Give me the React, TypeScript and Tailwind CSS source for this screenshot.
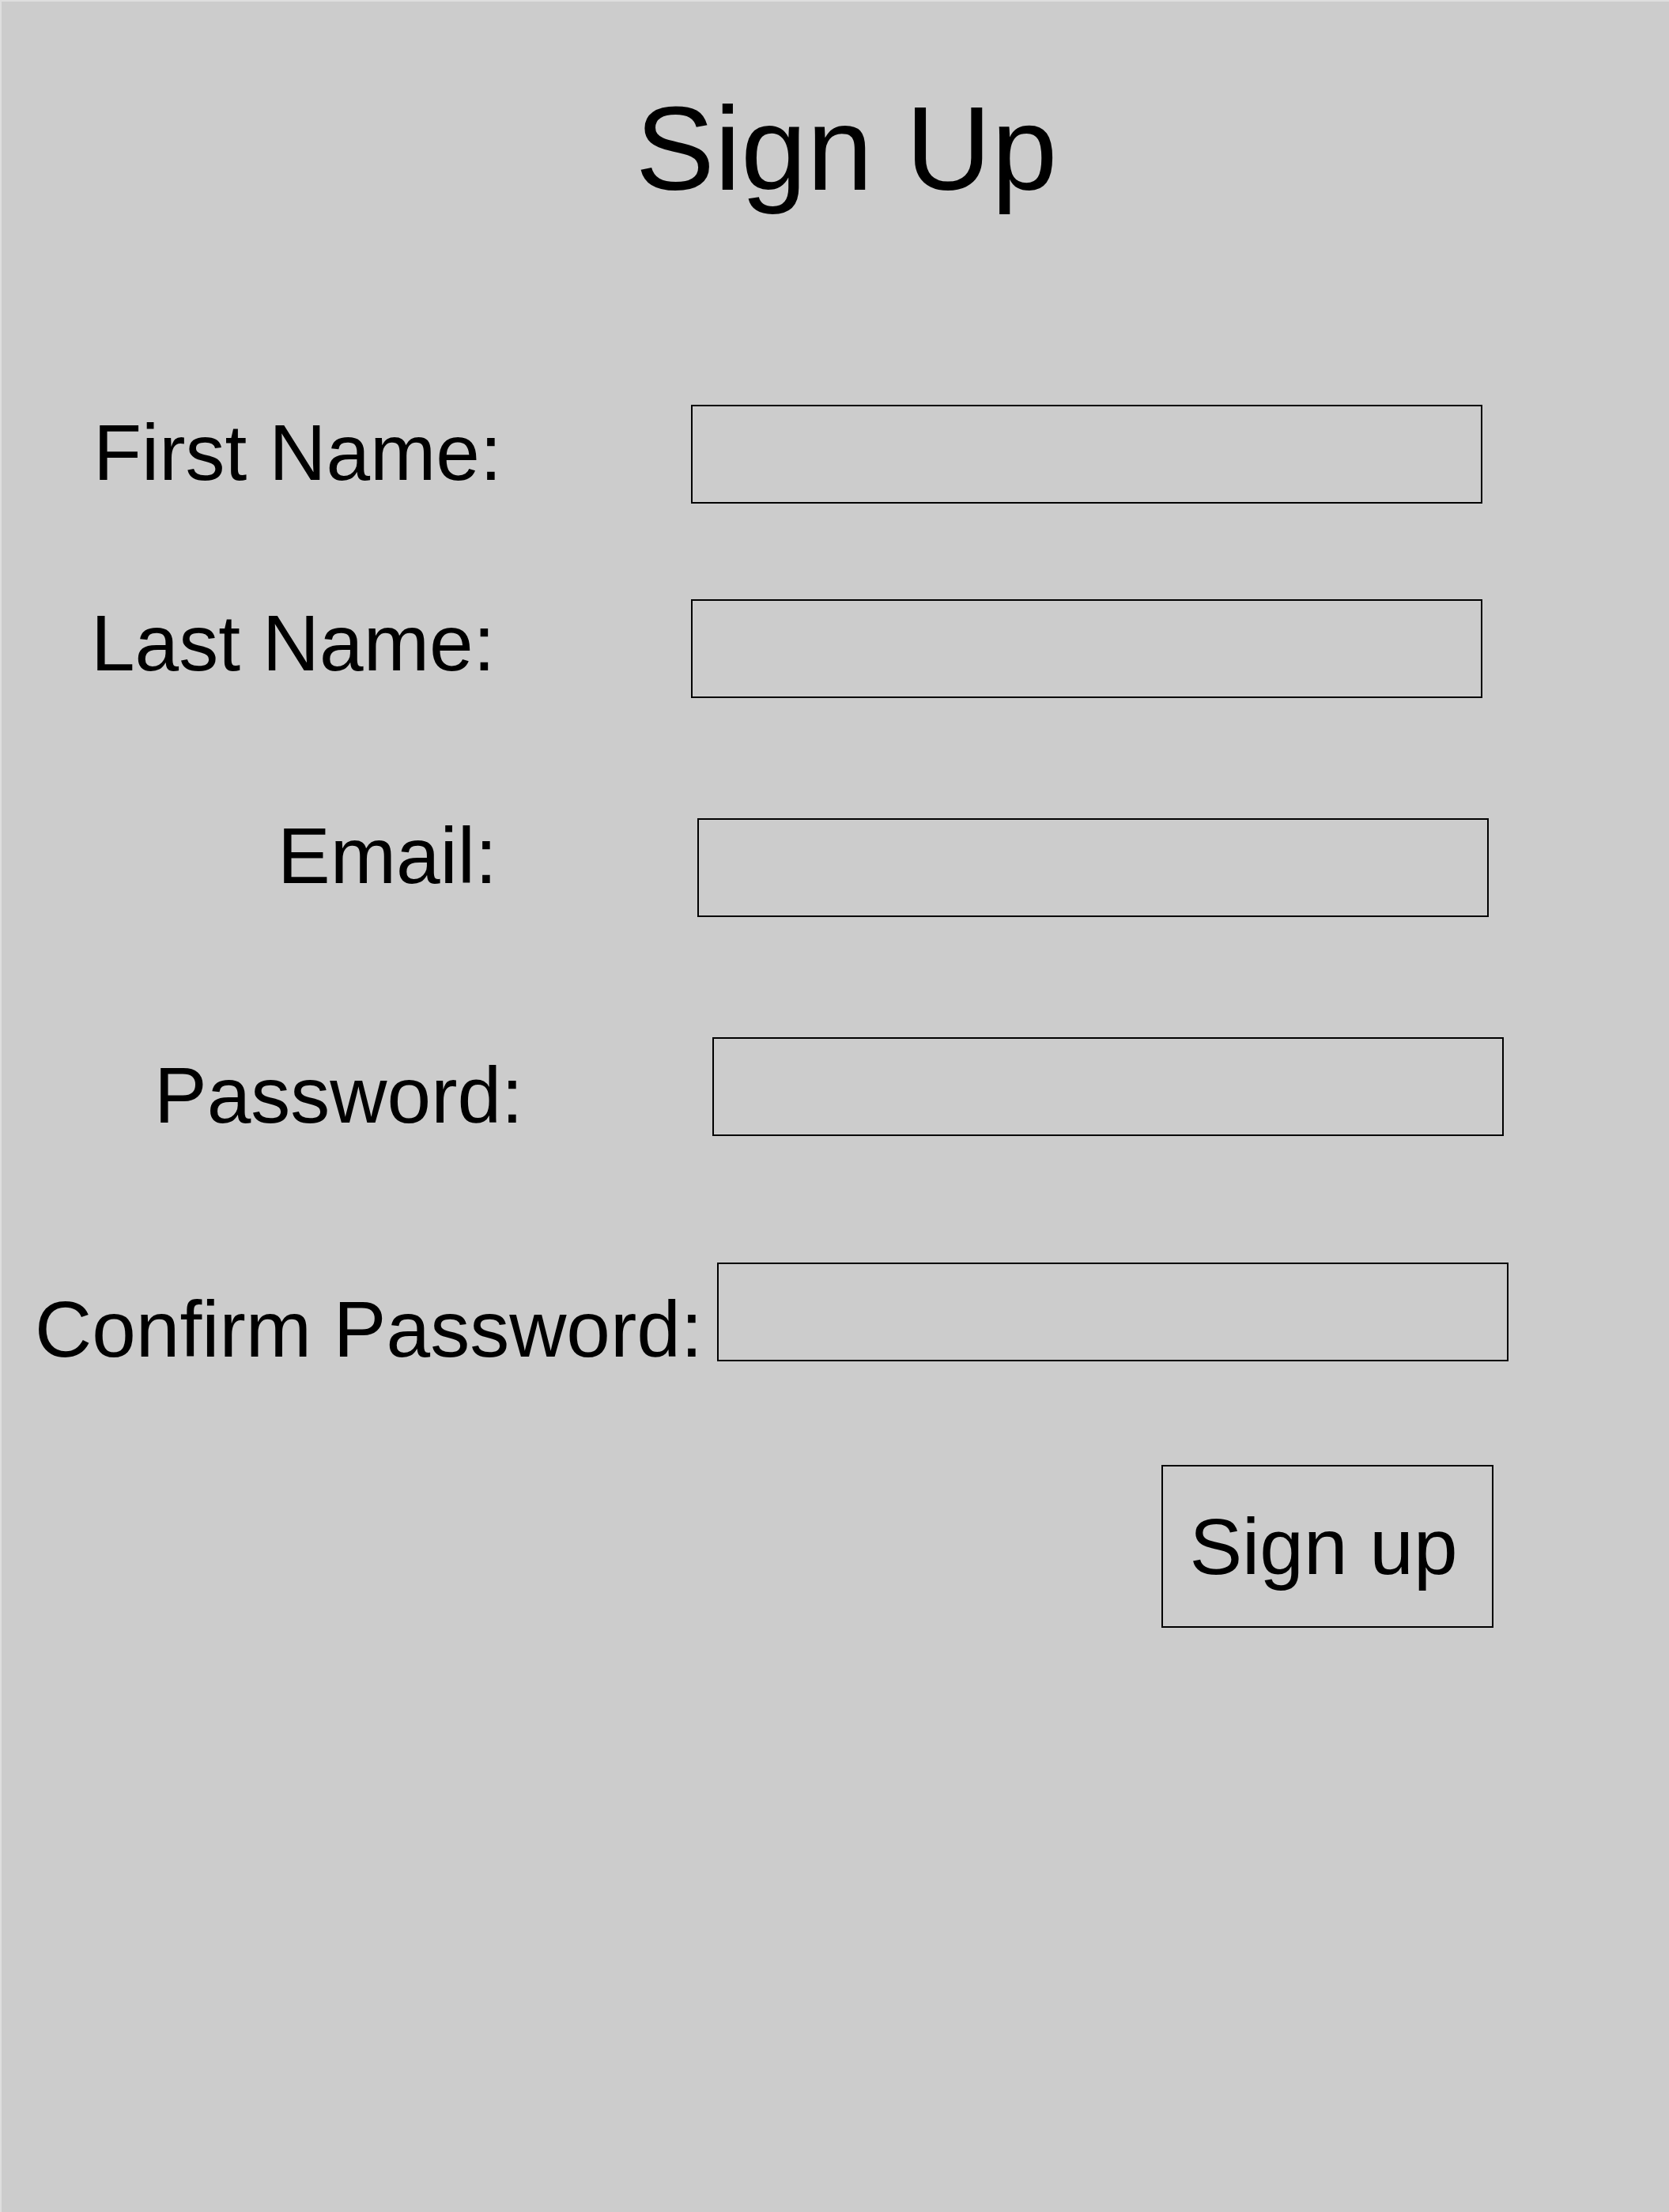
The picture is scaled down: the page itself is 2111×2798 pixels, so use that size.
const fields = [
  { label: "First Name:", type: "text", rowMt: "mt-[249px]", boxW: "w-[874px]", pl: "pl-[118px]", labelMt: "mt-[10px]", inputMt: "mt-0" },
  { label: "Last Name:", type: "text", rowMt: "mt-[121px]", boxW: "w-[874px]", pl: "pl-[115px]", labelMt: "mt-[5px]", inputMt: "mt-0" },
  { label: "Email:", type: "email", rowMt: "mt-[149px]", boxW: "w-[882px]", pl: "pl-[351px]", labelMt: "mt-0", inputMt: "mt-[3px]" },
  { label: "Password:", type: "password", rowMt: "mt-[152px]", boxW: "w-[901px]", pl: "pl-[195px]", labelMt: "mt-[23px]", inputMt: "mt-0" },
  { label: "Confirm Password:", type: "password", rowMt: "mt-[160px]", boxW: "w-[907px]", pl: "pl-[44px]", labelMt: "mt-[34px]", inputMt: "mt-0" },
];

const App = () => {
  return (
    <div
      className="min-h-screen bg-[#cccccc] text-black shadow-[inset_2px_2px_0_#dedede] flex flex-col"
      style={{ fontFamily: '"Liberation Sans", Arial, sans-serif' }}
    >
      <h1 className="mt-[113px] pl-[30px] text-center text-[150px] leading-none font-normal">
        Sign Up
      </h1>

      <form className="flex flex-col" onSubmit={(e) => e.preventDefault()}>
        {fields.map((f) => (
          <div key={f.label} className={`flex items-start ${f.rowMt}`}>
            <label
              className={`${f.boxW} ${f.pl} ${f.labelMt} shrink-0 whitespace-nowrap text-[100px] leading-none`}
            >
              {f.label}
            </label>
            <input
              type={f.type}
              className={`${f.inputMt} w-[1001px] h-[125px] shrink-0 border-2 border-black bg-transparent outline-none px-4 text-[60px]`}
            />
          </div>
        ))}

        <div className="flex mt-[122px]">
          <button
            type="submit"
            className="ml-[1469px] w-[420px] h-[206px] pr-[10px] border-2 border-black bg-transparent flex items-center justify-center text-[100px] leading-none"
          >
            Sign up
          </button>
        </div>
      </form>
    </div>
  );
};

export default App;
